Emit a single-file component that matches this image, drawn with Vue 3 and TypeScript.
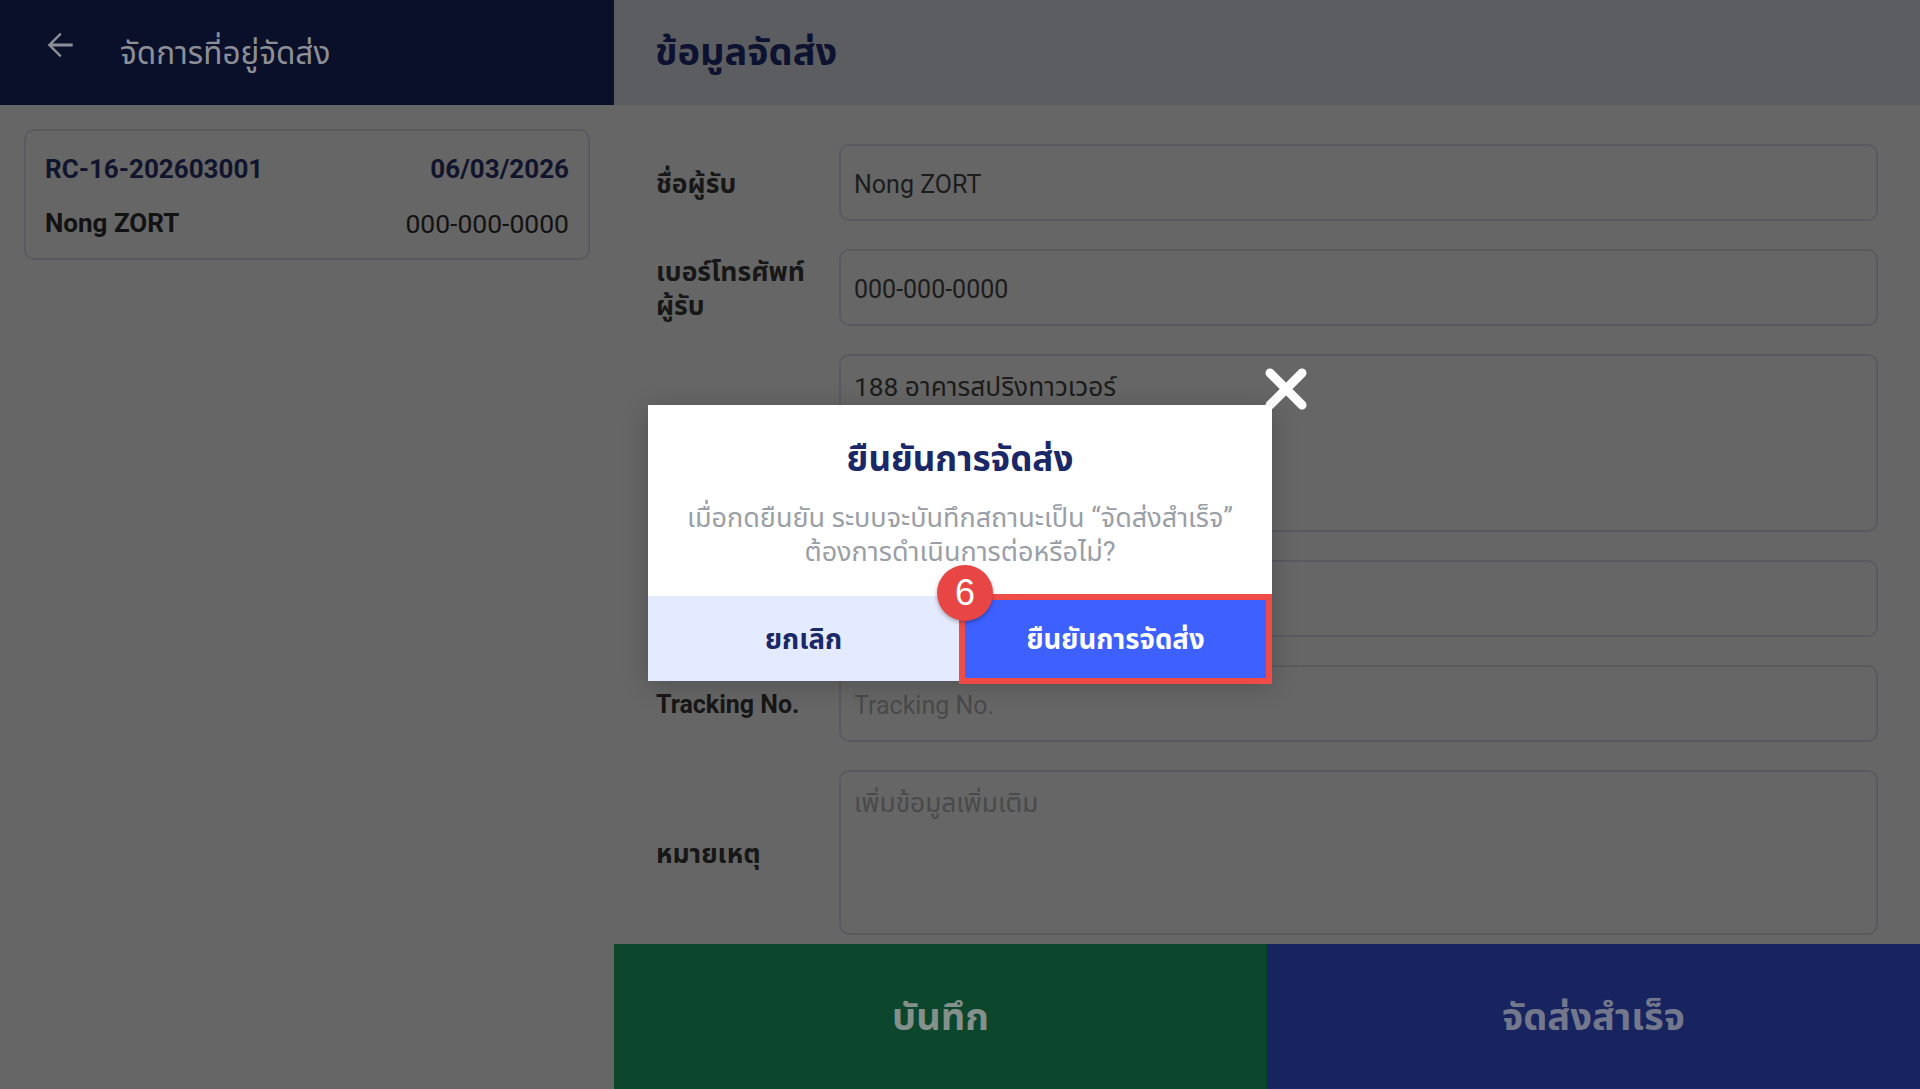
<template>
  <div class="screen">
    <aside class="side">
      <header class="side__head">
        <svg class="side__back" viewBox="0 0 24 24" width="38" height="38" aria-hidden="true">
          <path d="M20 11H7.3l5.7-5.7-1-1.1L4.2 12l7.8 7.8 1-1.1L7.3 13H20v-2z" fill="currentColor" />
        </svg>
        <span class="side__title">จัดการที่อยู่จัดส่ง</span>
      </header>
      <div class="card">
        <div class="card__row card__row--navy">
          <span>RC-16-202603001</span>
          <span>06/03/2026</span>
        </div>
        <div class="card__row">
          <strong>Nong ZORT</strong>
          <span class="card__phone">000-000-0000</span>
        </div>
      </div>
    </aside>

    <main class="detail">
      <header class="detail__head">ข้อมูลจัดส่ง</header>
      <form class="form" @submit.prevent>
        <div v-for="row in rows" :key="row.id" class="field">
          <label class="field__label" :class="{ 'field__label--latin': row.id === 'tracking' }">{{ row.label }}</label>
          <div
            class="field__box"
            :class="[`field__box--${row.size}`, { 'field__box--empty': row.placeholder, 'field__box--thai': row.thai }]"
          >
            {{ row.text }}
          </div>
        </div>
      </form>
      <footer class="actions">
        <button type="button" class="actions__btn actions__btn--save">บันทึก</button>
        <button type="button" class="actions__btn actions__btn--done">จัดส่งสำเร็จ</button>
      </footer>
    </main>

    <section class="dialog">
      <svg class="dialog__close" viewBox="0 0 44 44" width="44" height="44" aria-hidden="true">
        <path d="M6 6l32 32M38 6L6 38" stroke="#fff" stroke-width="9" stroke-linecap="round" />
      </svg>
      <div class="modal">
        <div class="modal__body">
          <h2 class="modal__title">ยืนยันการจัดส่ง</h2>
          <p class="modal__text">เมื่อกดยืนยัน ระบบจะบันทึกสถานะเป็น “จัดส่งสำเร็จ”<br />ต้องการดำเนินการต่อหรือไม่?</p>
        </div>
        <div class="modal__foot">
          <button type="button" class="modal__btn modal__btn--cancel">ยกเลิก</button>
          <button type="button" class="modal__btn modal__btn--confirm">ยืนยันการจัดส่ง</button>
        </div>
        <div class="mark"></div>
        <div class="badge">6</div>
      </div>
    </section>
  </div>
</template>

<script setup lang="ts">
interface Row {
  id: string;
  label: string;
  text: string;
  size: 'line' | 'address' | 'note';
  placeholder?: boolean;
  thai?: boolean;
}

const rows: Row[] = [
  { id: 'name', label: 'ชื่อผู้รับ', text: 'Nong ZORT', size: 'line' },
  { id: 'phone', label: 'เบอร์โทรศัพท์ผู้รับ', text: '000-000-0000', size: 'line' },
  { id: 'address', label: '', text: '188 อาคารสปริงทาวเวอร์', size: 'address', thai: true },
  { id: 'carrier', label: '', text: '', size: 'line' },
  { id: 'tracking', label: 'Tracking No.', text: 'Tracking No.', size: 'line', placeholder: true },
  { id: 'note', label: 'หมายเหตุ', text: 'เพิ่มข้อมูลเพิ่มเติม', size: 'note', placeholder: true, thai: true },
];
</script>

<style>
html,
body {
  margin: 0;
  background: #666;
}
</style>

<style scoped>
/* colours are the dimmed ones, as the page sits behind the dialog */
.screen {
  position: relative;
  display: flex;
  width: 1920px;
  height: 1089px;
  overflow: hidden;
  background: #666;
  font-family: Roboto, "Noto Sans", "Noto Sans Thai", sans-serif;
  color: #121212;
}

.side {
  width: 614px;
  flex-shrink: 0;
}

.side__head {
  display: flex;
  align-items: center;
  height: 105px;
  padding-left: 41px;
  gap: 41px;
  box-sizing: border-box;
  background: #0a1029;
  color: #8d8f97;
}

.side__back {
  margin-top: -16px;
}

.side__title {
  margin-top: 4px;
  font-size: 31.5px;
}

.card {
  margin: 24px 24px 0;
  padding: 14px 19px 0;
  height: 131px;
  box-sizing: border-box;
  border: 2px solid #5a5b61;
  border-radius: 10px;
}

.card__row {
  display: flex;
  justify-content: space-between;
  align-items: center;
  height: 48px;
  margin-bottom: 6px;
  font-size: 26px;
}

.card__row strong {
  font-weight: 700;
}

.card__phone {
  font-size: 26.5px;
}

.card__row--navy {
  color: #10142c;
  font-weight: 700;
}

.detail {
  flex: 1;
  display: flex;
  flex-direction: column;
  min-width: 0;
}

.detail__head {
  display: flex;
  align-items: center;
  height: 105px;
  padding: 2px 0 0 41px;
  box-sizing: border-box;
  flex-shrink: 0;
  background: #5c5d60;
  color: #0c1230;
  font-size: 38px;
  font-weight: 700;
}

.form {
  flex: 1;
  display: flex;
  flex-direction: column;
  gap: 28px;
  padding: 39px 42px 0 42px;
}

.field {
  display: flex;
  align-items: center;
}

.field__label {
  width: 183px;
  flex-shrink: 0;
  padding: 2px 15px 0 0;
  box-sizing: border-box;
  font-size: 26.5px;
  font-weight: 700;
  line-height: 34px;
  color: #171717;
}

.field__label--latin {
  font-size: 25px;
}

.field__box {
  flex: 1;
  padding: 0 13px;
  box-sizing: border-box;
  border: 2px solid #5a5b61;
  border-radius: 10px;
  font-size: 25px;
  color: #1c1c1c;
}

.field__box--thai {
  font-size: 26.3px;
}

.field__box--line {
  height: 77px;
  line-height: 77px;
}

.field__box--address {
  height: 178px;
  padding-top: 13px;
  line-height: 36px;
}

.field__box--note {
  height: 165px;
  padding-top: 13px;
  line-height: 36px;
}

.field__box--empty {
  color: #4a4a4a;
}

.actions {
  display: flex;
  height: 145px;
  flex-shrink: 0;
}

.actions__btn {
  flex: 1;
  padding-top: 4px;
  border: 0;
  font-family: inherit;
  font-size: 38px;
  font-weight: 700;
}

.actions__btn--save {
  background: #0c472d;
  color: #84908b;
}

.actions__btn--done {
  background: #182460;
  color: #73788d;
}

.dialog {
  position: absolute;
  left: 648px;
  top: 405px;
  width: 624px;
  height: 276px;
}

.dialog__close {
  position: absolute;
  right: -36px;
  top: -38px;
}

.modal {
  position: relative;
  display: flex;
  flex-direction: column;
  height: 100%;
  background: #fff;
  box-shadow: 0 4px 24px rgba(0, 0, 0, 0.22);
}

.modal__body {
  flex: 1;
  text-align: center;
}

.modal__title {
  margin: 31px 0 0;
  font-size: 35px;
  font-weight: 700;
  line-height: 48px;
  color: #1b2868;
}

.modal__text {
  margin: 17px 0 0;
  font-size: 27px;
  line-height: 34px;
  color: #9a9ea6;
}

.modal__foot {
  display: flex;
  height: 85px;
}

.modal__btn {
  padding-top: 4px;
  border: 0;
  font-family: inherit;
  font-size: 27.5px;
  font-weight: 700;
}

.modal__btn--cancel {
  width: 311px;
  background: #e4eaff;
  color: #1b2868;
}

.modal__btn--confirm {
  flex: 1;
  background: #3e60ff;
  color: #fff;
}

.mark {
  position: absolute;
  left: 311px;
  top: 189px;
  right: 0;
  bottom: -3px;
  border: 6px solid #ef4c48;
  pointer-events: none;
}

.badge {
  position: absolute;
  left: 289px;
  top: 160px;
  width: 56px;
  height: 56px;
  border-radius: 50%;
  background: #e84545;
  box-shadow: 0 2px 4px rgba(0, 0, 0, 0.3);
  color: #fff;
  font-family: "Liberation Sans", Arial, sans-serif;
  font-size: 36px;
  line-height: 56px;
  text-align: center;
}
</style>
